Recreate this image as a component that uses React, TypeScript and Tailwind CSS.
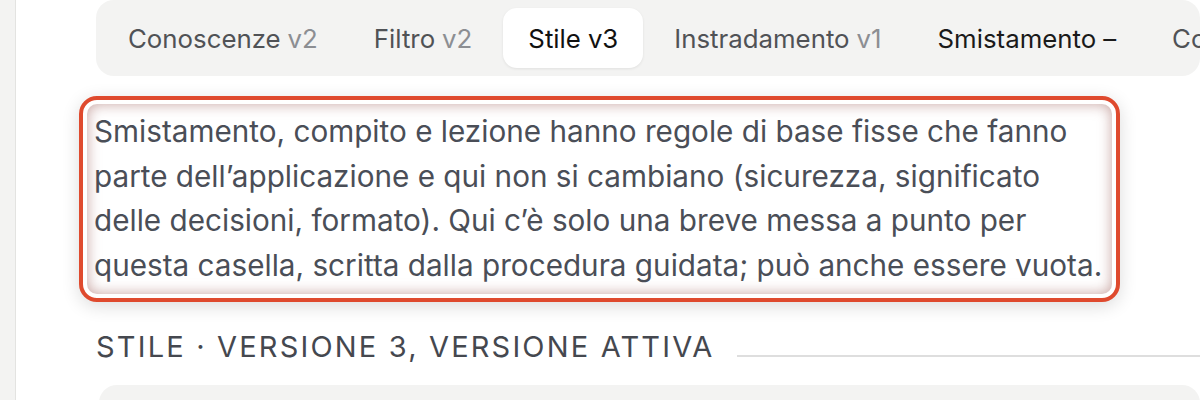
import React from 'react';

const tabs = [
    { name: 'Conoscenze', ver: 'v2' },
    { name: 'Filtro', ver: 'v2' },
    { name: 'Stile', ver: 'v3', active: true },
    { name: 'Instradamento', ver: 'v1' },
    { name: 'Smistamento', ver: '–', dark: true },
    { name: 'Compito', ver: 'v1' },
];

export default function App() {
    return (
        <div className="h-[400px] w-[1200px] overflow-hidden bg-white flex" style={{ fontFamily: 'Inter, "Noto Sans", sans-serif' }}>
            {/* left rail */}
            <div className="w-[16px] shrink-0 bg-[#f3f3f2] border-r border-[#e3e3e1]" />

            <div className="flex-1 min-w-0 pl-[63px]">
                {/* tab strip */}
                <div className="ml-[17px] h-[76px] rounded-[18px] bg-[#f3f3f2] flex items-center gap-[6px] px-[7px] whitespace-nowrap">
                    {tabs.map((t) => (
                        <div
                            key={t.name}
                            className={
                                t.active
                                    ? 'h-[60px] px-[25px] pt-[3px] flex items-center rounded-[14px] bg-white shadow-[0_1px_3px_rgba(0,0,0,0.08)] text-[25.8px] text-[#111]'
                                    : t.dark
                                      ? 'h-[60px] px-[25px] pt-[3px] flex items-center text-[25.8px] text-[#1a1a1a]'
                                      : 'h-[60px] px-[25px] pt-[3px] flex items-center text-[25.8px] text-[#505256]'
                            }
                        >
                            {t.name}
                            <span className={t.active || t.dark ? 'ml-[7px]' : 'ml-[7px] text-[#8c8e92]'}>{t.ver}</span>
                        </div>
                    ))}
                </div>

                {/* notice box */}
                <div className="mt-[20px] w-[1041px] rounded-[18px] border-[4px] border-[#df4a2e] bg-white p-[4px] shadow-[0_4px_18px_rgba(0,0,0,0.14)]">
                    <div className="rounded-[10px] pl-[7px] pr-[2px] pt-[5px] pb-[6px] shadow-[inset_0_0_14px_rgba(160,100,95,0.6)]">
                        <p className="text-[29.7px] leading-[44.7px] text-[#4a4e57]">
                            Smistamento, compito e lezione hanno regole di base fisse che fanno parte dell’applicazione e qui non si cambiano (sicurezza, significato delle decisioni, formato). Qui c’è solo una breve messa a punto per questa casella, scritta dalla procedura guidata; può anche essere vuota.
                        </p>
                    </div>
                </div>

                {/* section heading */}
                <div className="ml-[17px] mt-[30px] flex items-end gap-[22px]">
                    <h3 className="text-[29px] leading-[30px] tracking-[0.075em] uppercase text-[#45484f] whitespace-nowrap">
                        Stile · Versione 3, versione attiva
                    </h3>
                    <div className="flex-1 h-[2px] bg-[#dedede] mb-[5px]" />
                </div>

                {/* next card */}
                <div className="ml-[20px] mt-[23px] h-[40px] rounded-t-[18px] bg-[#f3f3f2]" />
            </div>
        </div>
    );
}
